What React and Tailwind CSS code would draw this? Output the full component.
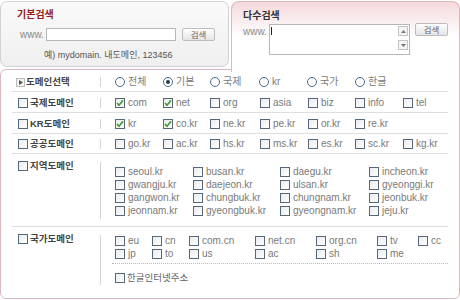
import React from "react";

const Check = ({ checked }) => (
  <span className="relative w-[10px] h-[10px] shrink-0 border border-[#56677a] bg-gradient-to-br from-[#e9ebee] to-white">
    {checked && (
      <svg className="absolute left-[0px] top-[0px]" width="8" height="8" viewBox="0 0 8 8">
        <path d="M1 4 L3 6.3 L7 1.2" fill="none" stroke="#3f9a2a" strokeWidth="1.6" />
      </svg>
    )}
  </span>
);

const Radio = ({ checked }) => (
  <span className="relative w-[10px] h-[10px] shrink-0 rounded-full border border-[#4b6d92] bg-white flex items-center justify-center">
    {checked && <span className="w-[4px] h-[4px] rounded-full bg-[#27384d]" />}
  </span>
);

const Opt = ({ label, checked, w, radio }) => (
  <div className={`flex items-center gap-[3px] ${w}`}>
    {radio ? <Radio checked={checked} /> : <Check checked={checked} />}
    <span className="text-[10px] leading-[12px] text-[#7a7a7a] whitespace-nowrap">{label}</span>
  </div>
);

const Label = ({ children }) => (
  <div className="flex items-center gap-[2px] pl-[6px] w-[88px] shrink-0">
    <Check />
    <span className="text-[9.5px] leading-[12px] font-bold text-[#444] whitespace-nowrap">{children}</span>
  </div>
);

const Sep = ({ h = "h-[10px]", extra = "" }) => <div className={`w-[1px] bg-[#d4d4d4] shrink-0 ${h} ${extra}`} />;

const Btn = () => (
  <div className="w-[33px] h-[13px] border border-[#bdbdbd] rounded-[2px] bg-gradient-to-b from-white to-[#e4e4e4] flex items-center justify-center text-[8.5px] leading-[10px] text-[#666]">
    검색
  </div>
);

export default function App() {
  return (
    <div className="w-[460px] h-[300px] bg-white font-['Liberation_Sans','Noto_Sans_CJK_KR',sans-serif] flex flex-col pt-[1px]">
      {/* tabs */}
      <div className="flex h-[68px] items-start">
        <div className="w-[229px] h-[66px] border border-[#d2d2d2] rounded-[7px] bg-gradient-to-b from-[#fafafa] to-[#efefef] pl-[16px] pt-[7px] flex flex-col">
          <div className="text-[10px] leading-[12px] font-bold text-[#9a1b1b]">기본검색</div>
          <div className="flex items-center mt-[6px] pl-[3px]">
            <span className="text-[10px] text-[#8a8a8a] w-[26px]">www.</span>
            <div className="w-[130px] h-[13px] border border-[#b7b7b7] bg-white" />
            <div className="ml-[6px]"><Btn /></div>
          </div>
          <div className="mt-[7px] pl-[27px] text-[9px] leading-[12px] text-[#555] whitespace-nowrap">예) mydomain. 내도메인, 123456</div>
        </div>
        <div className="relative z-10 ml-[2px] flex-1 h-[71px] -mb-[3px] border-t border-x border-[#dab8bc] rounded-t-[8px] bg-gradient-to-b from-[#f4d9dc] via-white to-white pl-[11px] pt-[8px] flex flex-col">
          <div className="text-[10px] leading-[12px] font-bold text-[#333]">다수검색</div>
          <div className="flex items-start mt-[2px]">
            <span className="text-[10px] leading-[12px] text-[#8a8a8a] w-[26px] mt-[2px]">www.</span>
            <div className="relative w-[141px] h-[31px] border border-[#b7b7b7] bg-white flex">
              <div className="ml-[1px] mt-[2px] w-[1px] h-[8px] bg-[#222]" />
              <div className="ml-auto mr-[1px] mt-[1px] flex flex-col gap-[4px]">
                <div className="w-[10px] h-[10px] border border-[#c4c4c4] bg-[#f4f4f4] flex items-center justify-center">
                  <svg width="5" height="3" viewBox="0 0 5 3"><path d="M0 3 L2.5 0 L5 3Z" fill="#777" /></svg>
                </div>
                <div className="w-[10px] h-[10px] border border-[#c4c4c4] bg-[#f4f4f4] flex items-center justify-center">
                  <svg width="5" height="3" viewBox="0 0 5 3"><path d="M0 0 L2.5 3 L5 0Z" fill="#777" /></svg>
                </div>
              </div>
            </div>
            <div className="ml-[5px] -mt-[1px]"><Btn /></div>
          </div>
        </div>
      </div>
      {/* panel */}
      <div className="flex-1 mb-[1px] border border-[#dab8bc] rounded-tl-[6px] rounded-b-[6px] px-[11px] flex flex-col">
        {/* row 1 */}
        <div className="h-[22px] border-b border-[#dedede] flex items-center pt-[3px]">
          <div className="flex items-center gap-[1px] pl-[4px] w-[88px] shrink-0">
            <span className="w-[9px] h-[9px] border border-[#bbb] bg-[#f2f2f2] flex items-center justify-center">
              <svg width="4" height="5" viewBox="0 0 4 5"><path d="M0 0 L4 2.5 L0 5Z" fill="#555" /></svg>
            </span>
            <span className="text-[9.5px] leading-[12px] font-bold text-[#444]">도메인선택</span>
          </div>
          <Sep />
          <div className="flex ml-[14px]">
            <Opt radio w="w-[48px]" label="전체" />
            <Opt radio checked w="w-[47px]" label="기본" />
            <Opt radio w="w-[49px]" label="국제" />
            <Opt radio w="w-[48px]" label="kr" />
            <Opt radio w="w-[48px]" label="국가" />
            <Opt radio w="w-[48px]" label="한글" />
          </div>
        </div>
        {/* row 2 */}
        <div className="h-[21px] border-b border-[#dedede] flex items-center pt-[2px]">
          <Label>국제도메인</Label>
          <Sep />
          <div className="flex ml-[14px]">
            <Opt checked w="w-[48px]" label="com" />
            <Opt checked w="w-[47px]" label="net" />
            <Opt w="w-[50px]" label="org" />
            <Opt w="w-[48px]" label="asia" />
            <Opt w="w-[47px]" label="biz" />
            <Opt w="w-[48px]" label="info" />
            <Opt w="w-[40px]" label="tel" />
          </div>
        </div>
        {/* row 3 */}
        <div className="h-[21px] border-b border-[#dedede] flex items-center pt-[2px]">
          <Label>KR도메인</Label>
          <Sep />
          <div className="flex ml-[14px]">
            <Opt checked w="w-[48px]" label="kr" />
            <Opt checked w="w-[47px]" label="co.kr" />
            <Opt w="w-[50px]" label="ne.kr" />
            <Opt w="w-[48px]" label="pe.kr" />
            <Opt w="w-[47px]" label="or.kr" />
            <Opt w="w-[48px]" label="re.kr" />
          </div>
        </div>
        {/* row 4 */}
        <div className="h-[20px] border-b border-[#dedede] flex items-center pt-[1px]">
          <Label>공공도메인</Label>
          <Sep />
          <div className="flex ml-[14px]">
            <Opt w="w-[48px]" label="go.kr" />
            <Opt w="w-[47px]" label="ac.kr" />
            <Opt w="w-[50px]" label="hs.kr" />
            <Opt w="w-[48px]" label="ms.kr" />
            <Opt w="w-[47px]" label="es.kr" />
            <Opt w="w-[48px]" label="sc.kr" />
            <Opt w="w-[40px]" label="kg.kr" />
          </div>
        </div>
        {/* row 5 */}
        <div className="h-[73px] border-b border-[#dedede] flex items-start">
          <div className="pt-[6px]"><Label>지역도메인</Label></div>
          <Sep h="h-[57px]" extra="mt-[8px]" />
          <div className="ml-[14px] pt-[11px] grid grid-cols-[78px_87px_89px_80px] auto-rows-[13px]">
            <Opt w="" label="seoul.kr" />
            <Opt w="" label="busan.kr" />
            <Opt w="" label="daegu.kr" />
            <Opt w="" label="incheon.kr" />
            <Opt w="" label="gwangju.kr" />
            <Opt w="" label="daejeon.kr" />
            <Opt w="" label="ulsan.kr" />
            <Opt w="" label="gyeonggi.kr" />
            <Opt w="" label="gangwon.kr" />
            <Opt w="" label="chungbuk.kr" />
            <Opt w="" label="chungnam.kr" />
            <Opt w="" label="jeonbuk.kr" />
            <Opt w="" label="jeonnam.kr" />
            <Opt w="" label="gyeongbuk.kr" />
            <Opt w="" label="gyeongnam.kr" />
            <Opt w="" label="jeju.kr" />
          </div>
        </div>
        {/* row 6 */}
        <div className="flex-1 flex items-start">
          <div className="pt-[6px]"><Label>국가도메인</Label></div>
          <Sep h="h-[50px]" extra="mt-[8px]" />
          <div className="flex-1 ml-[11px] pt-[7px] flex flex-col">
            <div className="pl-[3px] grid grid-cols-[37px_37px_66px_61px_61px_41px_30px] auto-rows-[13px] pb-[3px] border-b border-dotted border-[#bbbbbb]">
              <Opt w="" label="eu" />
              <Opt w="" label="cn" />
              <Opt w="" label="com.cn" />
              <Opt w="" label="net.cn" />
              <Opt w="" label="org.cn" />
              <Opt w="" label="tv" />
              <Opt w="" label="cc" />
              <Opt w="" label="jp" />
              <Opt w="" label="to" />
              <Opt w="" label="us" />
              <Opt w="" label="ac" />
              <Opt w="" label="sh" />
              <Opt w="" label="me" />
            </div>
            <div className="pl-[3px] mt-[8px] flex items-center gap-[2px]">
              <Check />
              <span className="text-[9.5px] leading-[12px] text-[#666]">한글인터넷주소</span>
            </div>
          </div>
        </div>
      </div>
    </div>
  );
}
